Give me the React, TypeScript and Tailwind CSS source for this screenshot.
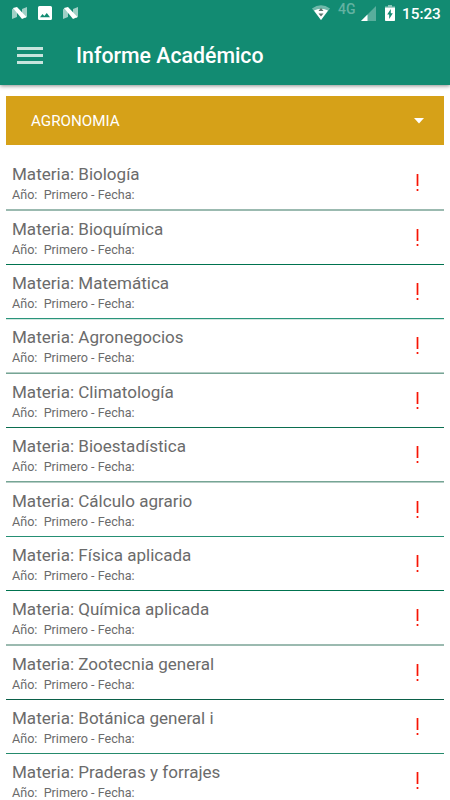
import React from 'react';

interface Subject {
  name: string;
  line: string;
}

// Dividers fall on fractional pixels, so some are drawn as a soft two pixel line
const SUBJECTS: Subject[] = [
  { name: 'Biología', line: 'h-0.5 -mb-px bg-[#9bbab0]' },
  { name: 'Bioquímica', line: 'h-px bg-[#00734f]' },
  { name: 'Matemática', line: 'h-0.5 -mb-px border-t border-[#2a947b] bg-[#d3e8e1]' },
  { name: 'Agronegocios', line: 'h-0.5 -mb-px border-t border-[#b5cdc5] bg-[#76a595]' },
  { name: 'Climatología', line: 'h-px bg-[#0b6e50]' },
  { name: 'Bioestadística', line: 'h-0.5 -mb-px border-t border-[#76a595] bg-[#b5cdc5]' },
  { name: 'Cálculo agrario', line: 'h-px bg-[#258f74]' },
  { name: 'Física aplicada', line: 'h-px bg-[#00734f]' },
  { name: 'Química aplicada', line: 'h-0.5 -mb-px bg-[#9bbab0]' },
  { name: 'Zootecnia general', line: 'h-px bg-[#0b6049]' },
  { name: 'Botánica general i', line: 'h-px bg-[#258a6c]' },
  { name: 'Praderas y forrajes', line: 'h-px bg-[#25785f]' },
];

const NougatIcon: React.FC = () => (
  <svg width="15" height="12" viewBox="0 0 15 12">
    <path d="M0 2.5 1.500 1 5 4.500V10L0 12zM10 2 15 0v9.500L13.500 11 10 7.500z" fill="#fff" fillOpacity=".6" />
    <path d="M1 1 5 0 14.500 10 10 12z" fill="#fff" />
  </svg>
);

const StatusBar: React.FC = () => (
  <div className="flex h-[27px] text-white">
    <div className="flex items-start gap-[11px] pl-3 pt-[7px]">
      <NougatIcon />
      <svg className="-mt-px" width="14" height="14" viewBox="0 0 14 14">
        <path fillRule="evenodd" fill="#fff" d="M1.500 0h11A1.500 1.500 0 0 1 14 1.500v11a1.500 1.500 0 0 1-1.500 1.500h-11A1.500 1.500 0 0 1 0 12.500v-11A1.500 1.500 0 0 1 1.500 0zM2 11.300h10L8.800 7 6.300 10.100 4.500 8z" />
      </svg>
      <NougatIcon />
    </div>
    <div className="ml-auto flex items-start pr-2.5">
      <svg className="mt-[5px]" width="18" height="15" viewBox="0 0 18 15">
        <path d="M0 3.500Q9-3 18 3.500L9 15z" fill="#fff" fillOpacity=".4" />
        <path d="M2 5.500Q9 1.800 16 5.500L9 15z" fill="#fff" />
        <path d="M6.500 6 9 2.800l2.500 3.200zM6.500 8.500h5L9 11.500z" fill="#5d746c" />
      </svg>
      <span className="ml-2 mt-[2px] w-[18px] text-[14px] font-medium leading-[14px] text-white/35">4G</span>
      <svg className="ml-[5px] mt-[6px]" width="15" height="15" viewBox="0 0 15 15">
        <path d="M15 0v15H0z" fill="#fff" fillOpacity=".3" />
        <path d="M6.500 8.500V15H0z" fill="#fff" />
      </svg>
      <svg className="ml-[9px] mt-[5px]" width="10" height="16" viewBox="0 0 10 16">
        <path d="M3 0h4v1.500h3V3H0V1.500h3z" fill="#fff" fillOpacity=".5" />
        <path d="M0 2.700h10V15.200q0 .8-.8.800H.8Q0 16 0 15.200z" fill="#fff" />
        <path d="M5.800 4v4.200h2L4.200 14V9.600h-2z" fill="#128b72" />
      </svg>
      <span className="ml-[7px] mt-[5px] w-[38px] whitespace-nowrap text-[15.300px] font-medium leading-[18px]">15:23</span>
    </div>
  </div>
);

const AppBar: React.FC = () => (
  <header className="relative h-[85px] bg-[#128b72] shadow-[0_1px_4px_rgba(0,0,0,0.45)]">
    <StatusBar />
    <div className="flex h-[57px] items-center pl-[17px]">
      <div className="flex w-[26px] flex-col gap-1">
        <span className="h-[3px] bg-[#c7e4dd]" />
        <span className="h-[3px] bg-[#c7e4dd]" />
        <span className="h-[3px] bg-[#c7e4dd]" />
      </div>
      <h1 className="ml-[33px] mt-px text-[21.300px] font-medium leading-6 text-white">Informe Académico</h1>
    </div>
  </header>
);

const SubjectRow: React.FC<Subject> = ({ name, line }) => (
  <li className="flex h-[54.370px] flex-col">
    <div className="flex flex-1 items-start pl-1.5 pr-[25px]">
      <div className="flex-1 text-[#6b6b6b]">
        <p className="pt-[7.400px] text-[17.050px] leading-[22px]">Materia: {name}</p>
        <p className="whitespace-pre text-[12.600px] leading-[19px]">Año:  Primero - Fecha:</p>
      </div>
      <div className="mt-[18.400px] flex w-[3px] flex-col gap-[3px]">
        <span className="h-3 border-x border-[#ffaaa0] bg-[#f51408]" />
        <span className="h-0.5 border-x border-[#ffaaa0] bg-[#f51408]" />
      </div>
    </div>
    <div className={line} />
  </li>
);

export default function App() {
  return (
    <div className="h-[800px] w-[450px] overflow-hidden bg-white font-['Roboto',sans-serif]">
      <AppBar />
      <main className="px-1.5 pt-[11px]">
        <div className="flex h-[49px] items-center justify-between bg-[#d6a118] pl-[25px] pr-5 text-white">
          <span className="mt-0.5 text-[15.200px]">AGRONOMIA</span>
          <svg width="10" height="6" viewBox="0 0 10 6">
            <path d="M0 0h10L5 5.500z" fill="#fff" />
          </svg>
        </div>
        <ul className="pt-[11px]">
          {SUBJECTS.map((subject) => (
            <SubjectRow key={subject.name} {...subject} />
          ))}
        </ul>
      </main>
    </div>
  );
}
